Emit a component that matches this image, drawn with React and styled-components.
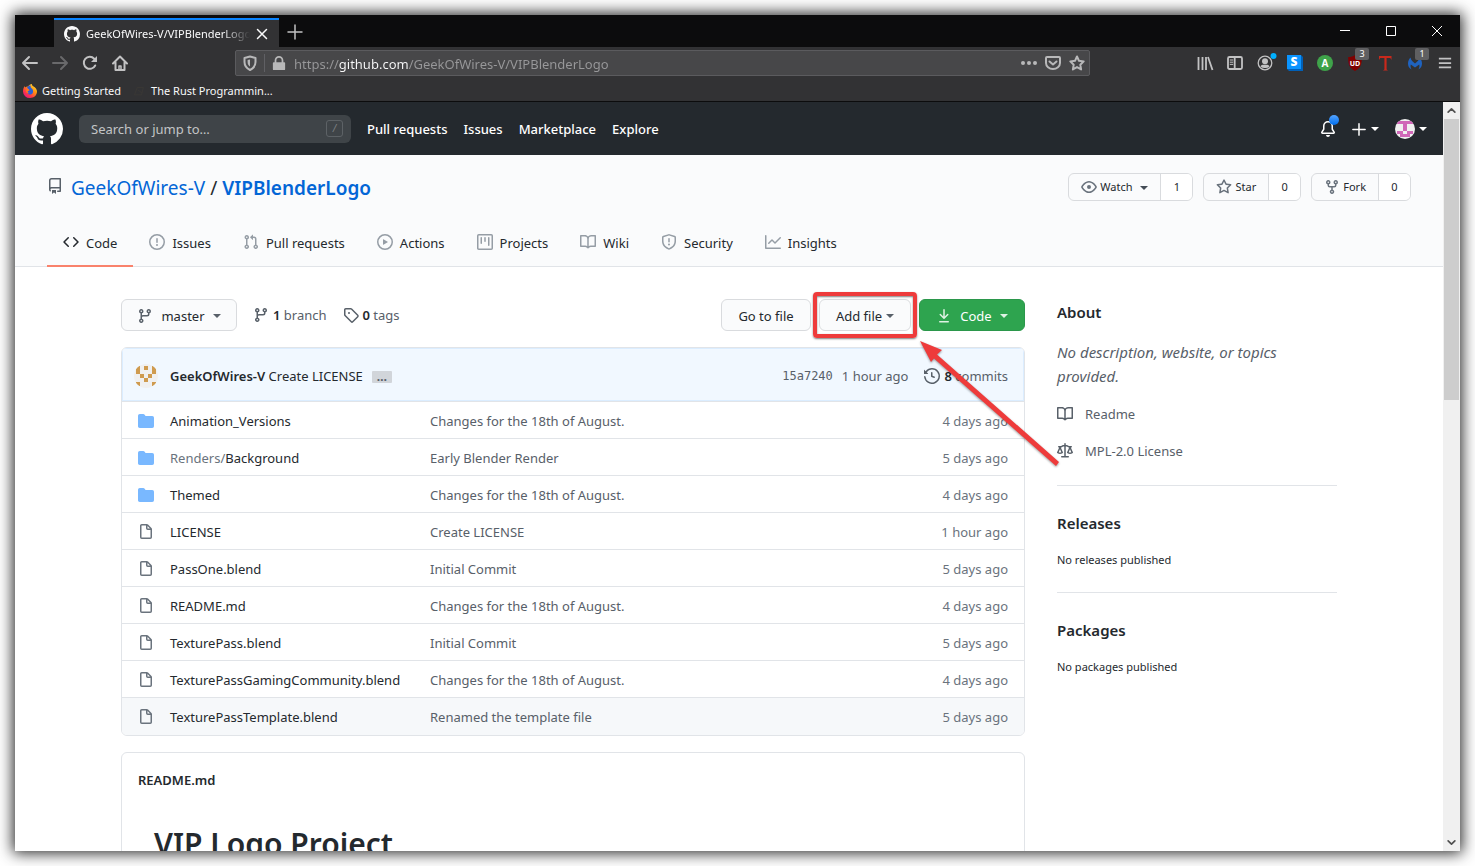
import React from "react";
import styled, { createGlobalStyle, css } from "styled-components";

const P = {
  repo: "M2 2.5A2.5 2.5 0 014.5 0h8.75a.75.75 0 01.75.75v12.5a.75.75 0 01-.75.75h-2.5a.75.75 0 110-1.5h1.75v-2h-8a1 1 0 00-.714 1.7.75.75 0 01-1.072 1.05A2.495 2.495 0 012 11.5v-9zm10.5-1V9h-8c-.356 0-.694.074-1 .208V2.5a1 1 0 011-1h8zM5 12.25v3.25a.25.25 0 00.4.2l1.45-1.087a.25.25 0 01.3 0L8.6 15.7a.25.25 0 00.4-.2v-3.25a.25.25 0 00-.25-.25h-3.5a.25.25 0 00-.25.25z",
  code: "M4.72 3.22a.75.75 0 011.06 1.06L2.06 8l3.72 3.72a.75.75 0 11-1.06 1.06L.47 8.53a.75.75 0 010-1.06l4.25-4.25zm6.56 0a.75.75 0 10-1.06 1.06L13.94 8l-3.72 3.72a.75.75 0 101.06 1.06l4.25-4.25a.75.75 0 000-1.06l-4.25-4.25z",
  issue: "M8 1.5a6.5 6.5 0 100 13 6.5 6.5 0 000-13zM0 8a8 8 0 1116 0A8 8 0 010 8zm9 3a1 1 0 11-2 0 1 1 0 012 0zm-.25-6.25a.75.75 0 00-1.5 0v3.5a.75.75 0 001.5 0v-3.5z",
  pull: "M7.177 3.073L9.573.677A.25.25 0 0110 .854v4.792a.25.25 0 01-.427.177L7.177 3.427a.25.25 0 010-.354zM3.75 2.5a.75.75 0 100 1.5.75.75 0 000-1.5zm-2.25.75a2.25 2.25 0 113 2.122v5.256a2.251 2.251 0 11-1.5 0V5.372A2.25 2.25 0 011.5 3.25zM11 2.5h-1V4h1a1 1 0 011 1v5.628a2.251 2.251 0 101.5 0V5A2.5 2.5 0 0011 2.5zm1 10.25a.75.75 0 111.5 0 .75.75 0 01-1.5 0zM3.75 12a.75.75 0 100 1.5.75.75 0 000-1.5z",
  play: "M1.5 8a6.5 6.5 0 1113 0 6.5 6.5 0 01-13 0zM8 0a8 8 0 100 16A8 8 0 008 0zM6.379 5.227A.25.25 0 006 5.442v5.117a.25.25 0 00.379.214l4.264-2.559a.25.25 0 000-.428L6.379 5.227z",
  project: "M1.75 0A1.75 1.75 0 000 1.75v12.5C0 15.216.784 16 1.75 16h12.5A1.75 1.75 0 0016 14.25V1.75A1.75 1.75 0 0014.25 0H1.75zM1.5 1.75a.25.25 0 01.25-.25h12.5a.25.25 0 01.25.25v12.5a.25.25 0 01-.25.25H1.75a.25.25 0 01-.25-.25V1.75zM11.75 3a.75.75 0 00-.75.75v7.5a.75.75 0 001.5 0v-7.5a.75.75 0 00-.75-.75zm-8.25.75a.75.75 0 011.5 0v5.5a.75.75 0 01-1.5 0v-5.5zM8 3a.75.75 0 00-.75.75v3.5a.75.75 0 001.5 0v-3.5A.75.75 0 008 3z",
  book: "M0 1.75A.75.75 0 01.75 1h4.253c1.227 0 2.317.59 3 1.501A3.744 3.744 0 0111.006 1h4.245a.75.75 0 01.75.75v10.5a.75.75 0 01-.75.75h-4.507a2.25 2.25 0 00-1.591.659l-.622.621a.75.75 0 01-1.06 0l-.622-.621A2.25 2.25 0 005.258 13H.75a.75.75 0 01-.75-.75V1.75zm8.755 3a2.25 2.25 0 012.25-2.25H14.5v9h-3.757c-.71 0-1.4.201-1.992.572l.004-7.322zm-1.504 7.324l.004-5.073-.002-2.253A2.25 2.25 0 005.003 2.5H1.5v9h3.757a3.75 3.75 0 011.994.574z",
  shield: "M7.467.133a1.75 1.75 0 011.066 0l5.25 1.68A1.75 1.75 0 0115 3.48V7c0 1.566-.32 3.182-1.303 4.682-.983 1.498-2.585 2.813-5.032 3.855a1.7 1.7 0 01-1.33 0c-2.447-1.042-4.049-2.357-5.032-3.855C1.32 10.182 1 8.566 1 7V3.48a1.75 1.75 0 011.217-1.667l5.25-1.68zm.61 1.429a.25.25 0 00-.153 0l-5.25 1.68a.25.25 0 00-.174.238V7c0 1.358.275 2.666 1.057 3.86.784 1.194 2.121 2.34 4.366 3.297a.2.2 0 00.154 0c2.245-.956 3.582-2.104 4.366-3.298C13.225 9.666 13.5 8.36 13.5 7V3.48a.25.25 0 00-.174-.237l-5.25-1.68zM9 10.5a1 1 0 11-2 0 1 1 0 012 0zm-.25-5.75a.75.75 0 10-1.5 0v3a.75.75 0 001.5 0v-3z",
  graph: "M1.5 1.75a.75.75 0 00-1.5 0v12.5c0 .414.336.75.75.75h14.5a.75.75 0 000-1.5H1.5V1.75zm14.28 2.53a.75.75 0 00-1.06-1.06L10 7.94 7.53 5.47a.75.75 0 00-1.06 0L3.22 8.72a.75.75 0 001.06 1.06L7 7.06l2.47 2.47a.75.75 0 001.06 0l5.25-5.25z",
  branch: "M11.75 2.5a.75.75 0 100 1.5.75.75 0 000-1.5zm-2.25.75a2.25 2.25 0 113 2.122V6A2.5 2.5 0 0110 8.5H6a1 1 0 00-1 1v1.128a2.251 2.251 0 11-1.5 0V5.372a2.25 2.25 0 111.5 0v1.836A2.492 2.492 0 016 7h4a1 1 0 001-1v-.628A2.25 2.25 0 019.5 3.25zM4.25 12a.75.75 0 100 1.5.75.75 0 000-1.5zM3.5 3.25a.75.75 0 111.5 0 .75.75 0 01-1.5 0z",
  tag: "M2.5 7.775V2.75a.25.25 0 01.25-.25h5.025a.25.25 0 01.177.073l6.25 6.25a.25.25 0 010 .354l-5.025 5.025a.25.25 0 01-.354 0l-6.25-6.25a.25.25 0 01-.073-.177zm-1.5 0V2.75C1 1.784 1.784 1 2.75 1h5.025c.464 0 .91.184 1.238.513l6.25 6.25a1.75 1.75 0 010 2.474l-5.026 5.026a1.75 1.75 0 01-2.474 0l-6.25-6.25A1.75 1.75 0 011 7.775zM6 5a1 1 0 100 2 1 1 0 000-2z",
  download: "M7.47 10.78a.75.75 0 001.06 0l3.75-3.75a.75.75 0 00-1.06-1.06L8.75 8.44V1.75a.75.75 0 00-1.5 0v6.69L4.78 5.97a.75.75 0 00-1.06 1.06l3.75 3.75zM3.75 13a.75.75 0 000 1.5h8.5a.75.75 0 000-1.5h-8.5z",
  history: "M1.643 3.143L.427 1.927A.25.25 0 000 2.104V5.75c0 .138.112.25.25.25h3.646a.25.25 0 00.177-.427L2.715 4.215a6.5 6.5 0 11-1.18 4.458.75.75 0 10-1.493.154 8.001 8.001 0 101.6-5.684zM7.75 4a.75.75 0 01.75.75v2.992l2.028.812a.75.75 0 01-.557 1.392l-2.5-1A.75.75 0 017 8.25v-3.5A.75.75 0 017.75 4z",
  law: "M8.75.75a.75.75 0 00-1.5 0V2h-.984c-.305 0-.604.08-.869.23l-1.288.737A.25.25 0 013.984 3H1.75a.75.75 0 000 1.5h.428L.066 9.192a.75.75 0 00.154.838l.53-.53-.53.53v.001l.002.002.002.002.006.006.016.015.045.04a3.514 3.514 0 00.686.45A4.492 4.492 0 003 11c.88 0 1.556-.22 2.023-.454a3.515 3.515 0 00.686-.45l.045-.04.016-.015.006-.006.002-.002.001-.002L5.25 9.5l.53.53a.75.75 0 00.154-.838L3.822 4.5h.162c.305 0 .604-.08.869-.23l1.289-.737a.25.25 0 01.124-.033h.984V13h-2.5a.75.75 0 000 1.5h6.5a.75.75 0 000-1.5h-2.5V3.5h.984a.25.25 0 01.124.033l1.29.736c.264.152.563.231.868.231h.162l-2.112 4.692a.75.75 0 00.154.838l.53-.53-.53.53v.001l.002.002.002.002.006.006.016.015.045.04a3.517 3.517 0 00.686.45A4.492 4.492 0 0013 11c.88 0 1.556-.22 2.023-.454a3.512 3.512 0 00.686-.45l.045-.04.01-.01.006-.005.006-.006.002-.002.001-.002-.529-.531.53.53a.75.75 0 00.154-.838L13.823 4.5h.427a.75.75 0 000-1.5h-2.234a.25.25 0 01-.124-.033l-1.29-.736A1.75 1.75 0 009.735 2H8.75V.75zM1.695 9.227c.285.135.718.273 1.305.273s1.02-.138 1.305-.273L3 6.327l-1.305 2.9zm10 0c.285.135.718.273 1.305.273s1.02-.138 1.305-.273L13 6.327l-1.305 2.9z",
  eye: "M1.679 7.932c.412-.621 1.242-1.75 2.366-2.717C5.175 4.242 6.527 3.5 8 3.5c1.473 0 2.824.742 3.955 1.715 1.124.967 1.954 2.096 2.366 2.717a.119.119 0 010 .136c-.412.621-1.242 1.75-2.366 2.717C10.825 11.758 9.473 12.5 8 12.5c-1.473 0-2.824-.742-3.955-1.715C2.92 9.818 2.09 8.69 1.679 8.068a.119.119 0 010-.136zM8 2c-1.981 0-3.67.992-4.933 2.078C1.797 5.169.88 6.423.43 7.1a1.619 1.619 0 000 1.798c.45.678 1.367 1.932 2.637 3.024C4.329 13.008 6.019 14 8 14c1.981 0 3.67-.992 4.933-2.078 1.27-1.091 2.187-2.345 2.637-3.023a1.619 1.619 0 000-1.798c-.45-.678-1.367-1.932-2.637-3.023C11.671 2.992 9.981 2 8 2zm0 8a2 2 0 100-4 2 2 0 000 4z",
  star: "M8 .25a.75.75 0 01.673.418l1.882 3.815 4.21.612a.75.75 0 01.416 1.279l-3.046 2.97.719 4.192a.75.75 0 01-1.088.791L8 12.347l-3.766 1.98a.75.75 0 01-1.088-.79l.72-4.194L.818 6.374a.75.75 0 01.416-1.28l4.21-.611L7.327.668A.75.75 0 018 .25zm0 2.445L6.615 5.5a.75.75 0 01-.564.41l-3.097.45 2.24 2.184a.75.75 0 01.216.664l-.528 3.084 2.769-1.456a.75.75 0 01.698 0l2.77 1.456-.53-3.084a.75.75 0 01.216-.664l2.24-2.183-3.096-.45a.75.75 0 01-.564-.41L8 2.694z",
  fork: "M5 3.25a.75.75 0 11-1.5 0 .75.75 0 011.5 0zm0 2.122a2.25 2.25 0 10-1.5 0v.878A2.25 2.25 0 005.75 8.5h1.5v2.128a2.251 2.251 0 101.5 0V8.5h1.5a2.25 2.25 0 002.25-2.25v-.878a2.25 2.25 0 10-1.5 0v.878a.75.75 0 01-.75.75h-4.5A.75.75 0 015 6.25v-.878zm3.75 7.378a.75.75 0 11-1.5 0 .75.75 0 011.5 0zm3-8.75a.75.75 0 100-1.5.75.75 0 000 1.5z",
  folder: "M1.75 1A1.75 1.75 0 000 2.75v10.5C0 14.216.784 15 1.75 15h12.5A1.75 1.75 0 0016 13.25v-8.5A1.75 1.75 0 0014.25 3h-6.5a.25.25 0 01-.2-.1l-.9-1.2c-.33-.44-.85-.7-1.4-.7h-3.5z",
  file: "M3.75 1.5a.25.25 0 00-.25.25v11.5c0 .138.112.25.25.25h8.5a.25.25 0 00.25-.25V6H9.75A1.75 1.75 0 018 4.25V1.5H3.75zm5.75.56v2.19c0 .138.112.25.25.25h2.19L9.5 2.06zM2 1.75C2 .784 2.784 0 3.75 0h5.086c.464 0 .909.184 1.237.513l3.414 3.414c.329.328.513.773.513 1.237v8.086A1.75 1.75 0 0112.25 15h-8.5A1.75 1.75 0 012 13.25V1.75z",
  bell: "M8 16a2 2 0 001.985-1.75c.017-.137-.097-.25-.235-.25h-3.5c-.138 0-.252.113-.235.25A2 2 0 008 16z M8 1.5A3.5 3.5 0 004.5 5v2.947c0 .346-.102.683-.294.97l-1.703 2.556a.018.018 0 00-.003.01l.001.006c0 .002.002.004.004.006a.017.017 0 00.006.004l.007.001h10.964l.007-.001a.016.016 0 00.006-.004.016.016 0 00.004-.006l.001-.007a.017.017 0 00-.003-.01l-1.703-2.554a1.75 1.75 0 01-.294-.97V5A3.5 3.5 0 008 1.5zM3 5a5 5 0 0110 0v2.947c0 .05.015.098.042.139l1.703 2.555A1.518 1.518 0 0113.482 13H2.518a1.518 1.518 0 01-1.263-2.36l1.703-2.554A.25.25 0 003 7.947V5z",
  github: "M8 0C3.58 0 0 3.58 0 8c0 3.54 2.29 6.53 5.47 7.59.4.07.55-.17.55-.38 0-.19-.01-.82-.01-1.49-2.01.37-2.53-.49-2.69-.94-.09-.23-.48-.94-.82-1.13-.28-.15-.68-.52-.01-.53.63-.01 1.08.58 1.23.82.72 1.21 1.87.87 2.33.66.07-.52.28-.87.51-1.07-1.78-.2-3.64-.89-3.64-3.95 0-.87.31-1.59.82-2.15-.08-.2-.36-1.02.08-2.12 0 0 .67-.21 2.2.82.64-.18 1.32-.27 2-.27.68 0 1.36.09 2 .27 1.53-1.04 2.2-.82 2.2-.82.44 1.1.16 1.92.08 2.12.51.56.82 1.27.82 2.15 0 3.07-1.87 3.75-3.65 3.95.29.25.54.73.54 1.48 0 1.07-.01 1.93-.01 2.2 0 .21.15.46.55.38A8.013 8.013 0 0016 8c0-4.42-3.58-8-8-8z",
};

const Oct = ({ name, size = 16 }) => (
  <svg width={size} height={size} viewBox="0 0 16 16" fill="currentColor" aria-hidden="true">
    <path fillRule="evenodd" d={P[name]} />
  </svg>
);

const Global = createGlobalStyle`
  *, *::before, *::after { box-sizing: border-box; }
  body { margin: 0; background: #fff; color: #24292e; font: 13px/20px "Noto Sans", "Open Sans", sans-serif; overflow: hidden; }
  a { color: inherit; text-decoration: none; }
  button, input { font: inherit; color: inherit; margin: 0; padding: 0; border: 0; background: none; }
  button { cursor: pointer; }
  svg { display: block; flex: none; overflow: visible; }
  h1, h2, p, ul { margin: 0; padding: 0; font-size: inherit; }
`;

/* ---------- browser window ---------- */
const Win = styled.div`
  margin: 15px;
  height: calc(100vh - 30px);
  display: flex;
  flex-direction: column;
  overflow: hidden;
  background: #fff;
  box-shadow: 0 0 14px 2px rgba(0, 0, 0, 0.85);
`;
const TabStrip = styled.div`
  flex: none;
  height: 32px;
  display: flex;
  align-items: flex-end;
  padding-left: 39px;
  background: #0c0c0d;
  color: #f9f9fa;
  font-size: 11px;
`;
const BrowserTab = styled.div`
  width: 225px;
  height: 29px;
  display: flex;
  align-items: center;
  gap: 6px;
  padding: 0 11px 0 10px;
  border-top: 2px solid #0a84ff;
  background: #323234;
`;
const TabLabel = styled.span`
  flex: 1;
  min-width: 0;
  overflow: hidden;
  white-space: nowrap;
  mask-image: linear-gradient(to left, transparent, #000 28px);
`;
const IconButton = styled.button`
  position: relative;
  flex: none;
  width: ${(p) => p.$w || 30}px;
  height: ${(p) => p.$h || 32}px;
  display: flex;
  align-items: center;
  justify-content: center;
  color: ${(p) => p.$color || "#c2c2c3"};
`;
const Spacer = styled.div`
  flex: 1;
`;
const Toolbar = styled.div`
  flex: none;
  height: 32px;
  display: flex;
  align-items: center;
  background: #323234;
`;
const UrlBox = styled.div`
  flex: 1;
  height: 26px;
  margin: 0 100px;
  display: flex;
  align-items: center;
  padding: 0 1px 0 6px;
  border: 1px solid #5b5b5e;
  border-radius: 2px;
  background: #474749;
  color: #b8b8b9;
`;
const UrlDivider = styled.span`
  width: 1px;
  height: 18px;
  margin: 0 7px 0 6px;
  background: #606064;
`;
const UrlInput = styled.input`
  flex: 1;
  min-width: 0;
  margin-left: 8px;
  padding-top: 2px;
  outline: 0;
  color: transparent;
  background: linear-gradient(90deg, #98989a 45px, #f9f9fa 45px, #f9f9fa 115px, #98989a 115px);
  -webkit-background-clip: text;
  background-clip: text;
`;
const UrlActions = styled.div`
  display: flex;
  align-items: center;
  gap: 8px;
  padding-right: 3px;
`;
const Count = styled.span`
  position: absolute;
  top: 1px;
  right: 1px;
  width: 14px;
  height: 12px;
  border-radius: 2px;
  background: #5f5f61;
  color: #fff;
  font-size: 9px;
  line-height: 12px;
  text-align: center;
`;
const Bookmarks = styled.div`
  flex: none;
  height: 23px;
  display: flex;
  align-items: center;
  gap: 11px;
  padding: 1px 8px 0;
  border-bottom: 1px solid #0c0c0d;
  background: #323234;
  color: #f9f9fa;
  font-size: 11px;
`;
const Bookmark = styled.a`
  display: flex;
  align-items: center;
  gap: 5px;
`;
const Viewport = styled.div`
  flex: 1;
  min-height: 0;
  display: flex;
`;
const Page = styled.div`
  flex: 1;
  min-width: 0;
  overflow: hidden;
`;
const Scrollbar = styled.div`
  flex: none;
  width: 17px;
  display: flex;
  flex-direction: column;
  align-items: center;
  background: #f0f0f0;
  padding: 0 1px;
`;
const Thumb = styled.div`
  width: 100%;
  height: 37.5%;
  background: #cdcdcd;
`;

/* ---------- site header ---------- */
const Header = styled.header`
  height: 53px;
  display: flex;
  align-items: center;
  gap: 16px;
  padding: 0 16px;
  background: #24292e;
  color: #fff;
  font-weight: 500;
`;
const SearchBox = styled.label`
  width: 272px;
  height: 28px;
  display: flex;
  align-items: center;
  padding: 0 8px 0 12px;
  border-radius: 6px;
  background: #3f4448;
  font-weight: 400;
`;
const SearchInput = styled.input`
  flex: 1;
  min-width: 0;
  outline: 0;
  &::placeholder { color: #c3c5c6; opacity: 1; }
`;
const Slash = styled.kbd`
  width: 17px;
  height: 17px;
  border: 1px solid #5d6266;
  border-radius: 3px;
  color: #7d8185;
  font: italic 10px/15px "Noto Sans", sans-serif;
  text-align: center;
`;
const HeaderTools = styled.div`
  margin-left: auto;
  display: flex;
  align-items: center;
  gap: 16px;
`;
const HeaderButton = styled.button`
  position: relative;
  display: flex;
  align-items: center;
  gap: ${(p) => p.$gap || 5}px;
`;
const Dot = styled.span`
  position: absolute;
  top: -6px;
  right: -3px;
  width: 10px;
  height: 10px;
  border-radius: 50%;
  background: linear-gradient(#54a3ff, #006eed);
`;
const Caret = styled.span`
  flex: none;
  border: 4px solid transparent;
  border-top-color: currentColor;
  border-bottom: 0;
`;

/* ---------- repository header ---------- */
const RepoHead = styled.div`
  border-bottom: 1px solid #e1e4e8;
  background: #fafbfc;
`;
const TitleRow = styled.div`
  display: flex;
  align-items: flex-start;
  justify-content: space-between;
  padding: 18px 32px 0;
`;
const Title = styled.h1`
  display: flex;
  align-items: center;
  font-size: 19px;
  line-height: 30px;
  font-weight: 400;
  color: #0366d6;
  svg { margin: -4px 8px 0 0; color: #586069; }
  b { font-weight: 600; }
`;
const Sep = styled.span`
  margin: 0 5px;
  color: #24292e;
`;
const Social = styled.div`
  display: flex;
  gap: 10px;
  font-size: 11px;
`;
const SplitButton = styled.div`
  display: flex;
  height: 28px;
  border: 1px solid #d9dbde;
  border-radius: 6px;
  overflow: hidden;
  background: #fafbfc;
`;
const SplitMain = styled.button`
  display: flex;
  align-items: center;
  gap: 3px;
  padding: 0 12px;
  svg { color: #6a737d; }
  ${Caret} { margin: 2px 0 0 5px; color: #444d56; }
`;
const SplitCount = styled.a`
  min-width: 32px;
  padding: 3px 12px;
  border-left: 1px solid #d9dbde;
  background: #fff;
  text-align: center;
`;
const Tabs = styled.nav`
  display: flex;
  padding: 18px 32px 0;
`;
const Tab = styled.a`
  height: 46px;
  display: flex;
  align-items: center;
  gap: 7px;
  padding: 0 16px;
  border-bottom: 2px solid transparent;
  margin-bottom: -1px;
  svg { color: #959da5; margin-top: -2px; }
  ${(p) => p.$on && css`
    border-bottom-color: #f9826c;
    svg { color: #24292e; }
  `}
`;

/* ---------- repository body ---------- */
const Body = styled.div`
  max-width: 1280px;
  margin: 0 auto;
  padding: 32px;
  display: flex;
  gap: 32px;
`;
const Main = styled.main`
  flex: 1;
  min-width: 0;
`;
const Actions = styled.div`
  display: flex;
  align-items: center;
  height: 32px;
  gap: 8px;
  margin-bottom: 16px;
`;
const Btn = styled.button`
  height: 32px;
  width: ${(p) => p.$w}px;
  display: flex;
  align-items: center;
  justify-content: center;
  gap: ${(p) => p.$gap || 0}px;
  padding-top: 2px;
  border: 1px solid ${(p) => (p.$primary ? "#2b974b" : "#d9dbde")};
  border-radius: 6px;
  background: ${(p) => (p.$primary ? "#2ea44f" : "#fafbfc")};
  color: ${(p) => (p.$primary ? "#fff" : "#24292e")};
  svg, ${Caret} { color: ${(p) => (p.$primary ? "#dff2e4" : "#586069")}; }
`;
const Stat = styled.a`
  display: flex;
  align-items: center;
  gap: 4px;
  margin-left: ${(p) => p.$ml || 8}px;
  color: #586069;
  b { font-weight: 600; color: #24292e; }
`;
const Highlighted = styled.div`
  position: relative;
`;
const Frame = styled.span`
  position: absolute;
  inset: -7px -6px;
  border: 4px solid #ee3b3b;
  border-radius: 4px;
  box-shadow: 0 1px 2px rgba(0, 0, 0, 0.5), inset 0 1px 2px rgba(0, 0, 0, 0.5);
  pointer-events: none;
`;
const Arrow = styled.svg`
  position: absolute;
  top: 41px;
  left: 100px;
  z-index: 2;
  filter: drop-shadow(0 1px 1px rgba(0, 0, 0, 0.4));
  pointer-events: none;
`;
const Files = styled.div`
  border: 1px solid #e1e4e8;
  border-radius: 6px;
  overflow: hidden;
`;
const Commit = styled.div`
  height: 53px;
  display: flex;
  align-items: center;
  padding: 2px 16px 0 12px;
  background: #f1f8ff;
  box-shadow: inset 0 0 0 1px #dbedff;
  color: #586069;
`;
const CommitText = styled.span`
  margin-left: 12px;
  color: #24292e;
  b { font-weight: 600; }
`;
const Ellipsis = styled.button`
  width: 20px;
  height: 12px;
  margin: 3px auto 0 9px;
  border-radius: 1px;
  background: #d1d5da;
  font-size: 12px;
  font-weight: 700;
  line-height: 6px;
`;
const Sha = styled.a`
  margin-right: 9px;
  font: 12px/20px "DejaVu Sans Mono", "Liberation Mono", monospace;
`;
const Table = styled.table`
  width: 100%;
  border-collapse: collapse;
  table-layout: fixed;
`;
const Row = styled.tr`
  height: 37px;
  background: ${(p) => (p.$hover ? "#f6f8fa" : "#fff")};
  td { padding: 2px 0 0; border-top: 1px solid #e1e4e8; white-space: nowrap; color: #586069; }
`;
const IconCell = styled.td`
  width: 48px;
  svg { margin-left: 16px; color: ${(p) => (p.$dir ? "#79b8ff" : "#6a737d")}; }
`;
const NameCell = styled.td`
  width: 260px;
  a { color: #24292e; }
  i { font-style: normal; color: #6a737d; }
`;
const AgeCell = styled.td`
  width: 140px;
  text-align: right;
  && { padding-right: 16px; color: #6a737d; }
`;
const Readme = styled.section`
  margin-top: 16px;
  padding: 17px 16px;
  height: 240px;
  border: 1px solid #e1e4e8;
  border-radius: 6px;
  h2 { font-weight: 600; font-size: 13px; }
  h1 { margin: 34px 16px 0; font-size: 30px; line-height: 40px; font-weight: 600; }
`;
const Side = styled.aside`
  flex: none;
  width: 280px;
`;
const SideBlock = styled.section`
  padding: ${(p) => (p.$first ? "1px 0 24px" : "25px 0 22px")};
  border-bottom: ${(p) => (p.$last ? "0" : "1px solid #e1e4e8")};
  h2 { font-size: 15px; line-height: 24px; font-weight: 600; }
`;
const About = styled.p`
  margin: 16px 0;
  font-size: 15px;
  line-height: 24px;
  font-style: italic;
  color: #586069;
`;
const SideLink = styled.a`
  display: flex;
  align-items: center;
  gap: 12px;
  height: 20px;
  margin-bottom: 17px;
  color: #586069;
  &:last-child { margin-bottom: 0; }
`;
const Note = styled.p`
  && { margin-top: 15px; font-size: 11px; }
`;

const Svg = ({ s = 16, children, ...r }) => (
  <svg width={s} height={s} viewBox="0 0 16 16" fill="none" stroke="currentColor" strokeWidth="2" strokeLinecap="round" strokeLinejoin="round" aria-hidden="true" {...r}>
    {children}
  </svg>
);

const Firefox = () => (
  <svg width="14" height="14" viewBox="0 0 14 14" aria-hidden="true">
    <defs>
      <linearGradient id="fx" x1="1" y1="0" x2="0.2" y2="1">
        <stop offset="0" stopColor="#fff44f" />
        <stop offset="0.4" stopColor="#ff980e" />
        <stop offset="0.75" stopColor="#ff3647" />
        <stop offset="1" stopColor="#e31587" />
      </linearGradient>
    </defs>
    <path d="M7 14a6.8 6.8 0 01-7-6.600C0 5 .8 3.200 1.800 2l.2 1.500C3 2.500 4 2.300 5 2.400 6 1.200 7.500.3 9 0c-.3 1 .3 1.600 1.200 2.200C12.500 3.500 14 5.200 14 7.500 14 11.200 11 14 7 14z" fill="url(#fx)" />
    <path d="M4 3.500c1.200-1.500 2.600-1.900 3.600-1.900-.2 1.300 0 2 .9 2.700C9.800 5 10.400 7 9.900 8.500 9.300 10.300 7.500 11 6 10.400 4.300 9.800 3.600 8 4.300 6.600l2.200-.4z" fill="#2a5fd6" />
    <path d="M3.300 5.500c1.200-.5 2.200 0 3.200.4-.4.900-1.500.7-1.800 1.600-.2 1 .9 1.500 2 1.200-1.500 1.300-3.700.2-3.600-1.800z" fill="#ff7a1c" />
  </svg>
);

const Identicon = ({ size, color, cells }) => (
  <svg width={size} height={size} viewBox="0 0 24 24" aria-hidden="true">
    <clipPath id={"c" + size}><circle cx="12" cy="12" r="12" /></clipPath>
    <g clipPath={`url(#c${size})`} shapeRendering="crispEdges">
      <rect width="24" height="24" fill="#f0f0f0" />
      {cells.map(([x, y]) => <rect key={x + "-" + y} x={2 + x * 4} y={2 + y * 4} width="4" height="4" fill={color} />)}
    </g>
  </svg>
);

const TABS = [["code", "Code"], ["issue", "Issues"], ["pull", "Pull requests"], ["play", "Actions"], ["project", "Projects"], ["book", "Wiki"], ["shield", "Security"], ["graph", "Insights"]];
const AUG = "Changes for the 18th of August.";
const FILES = [
  ["Animation_Versions", AUG, "4 days ago", true],
  ["Background", "Early Blender Render", "5 days ago", true, "Renders/"],
  ["Themed", AUG, "4 days ago", true],
  ["LICENSE", "Create LICENSE", "1 hour ago"],
  ["PassOne.blend", "Initial Commit", "5 days ago"],
  ["README.md", AUG, "4 days ago"],
  ["TexturePass.blend", "Initial Commit", "5 days ago"],
  ["TexturePassGamingCommunity.blend", AUG, "4 days ago"],
  ["TexturePassTemplate.blend", "Renamed the template file", "5 days ago"],
];

function Browser() {
  return (
    <>
      <TabStrip>
        <BrowserTab>
          <Oct name="github" />
          <TabLabel>GeekOfWires-V/VIPBlenderLogo</TabLabel>
          <IconButton $w={12} $h={20} $color="#f9f9fa" aria-label="Close tab">
            <Svg s={12}><path d="M2 2l12 12M14 2L2 14" /></Svg>
          </IconButton>
        </BrowserTab>
        <IconButton $w={32} $h={30} aria-label="New tab"><Svg s={14} strokeWidth="1.700"><path d="M8 0v16M0 8h16" /></Svg></IconButton>
        <Spacer />
        {[["Minimize", "M3 7.500h10"], ["Maximize", "M3.500 3.500h9v9h-9z"], ["Close", "M3 3l10 10M13 3L3 13"]].map(([l, d]) => (
          <IconButton key={l} $w={46} $color="#fff" aria-label={l}><Svg strokeWidth="1" strokeLinecap="butt" strokeLinejoin="miter"><path d={d} /></Svg></IconButton>
        ))}
      </TabStrip>
      <Toolbar>
        <IconButton aria-label="Back"><Svg><path d="M15 8H1M7 2L1 8l6 6" /></Svg></IconButton>
        <IconButton $color="#69696b" aria-label="Forward"><Svg><path d="M1 8h14M9 2l6 6-6 6" /></Svg></IconButton>
        <IconButton aria-label="Reload">
          <Svg><path d="M13.200 10.500a6 6 0 11-1-6.800" /><path d="M15 1v6H9z" fill="currentColor" stroke="none" /></Svg>
        </IconButton>
        <IconButton aria-label="Home">
          <Svg><path d="M1 8.500L8 1.500l7 7M3.500 7.500V15h9V7.500" /><path d="M7 15v-4h2v4" strokeWidth="1.500" /></Svg>
        </IconButton>
        <UrlBox>
          <Svg><path d="M2.500 3L8 1.500 13.500 3v4c0 4-2.500 6.500-5.500 8-3-1.500-5.500-4-5.500-8z" /><path d="M8 4.500v7C6.500 10.500 5.600 9 5.600 7V5z" fill="currentColor" stroke="none" /></Svg>
          <UrlDivider />
          <Svg s={14}><rect x="1" y="7" width="14" height="9" rx="1" fill="currentColor" stroke="none" /><path d="M4 8V5a4 4 0 018 0v3" /></Svg>
          <UrlInput aria-label="Address" defaultValue="https://github.com/GeekOfWires-V/VIPBlenderLogo" />
          <UrlActions>
            <Svg fill="currentColor" stroke="none"><circle cx="2" cy="8" r="2" /><circle cx="8" cy="8" r="2" /><circle cx="14" cy="8" r="2" /></Svg>
            <Svg><path d="M1 3a1 1 0 011-1h12a1 1 0 011 1v5a7 6 0 01-14 0zM4.500 6.500L8 9.500l3.500-3" /></Svg>
            <Svg><path d="M8 1.500l2 4.300 4.700.6-3.400 3.300.8 4.700L8 12.100l-4.100 2.300.8-4.700L1.300 6.400 6 5.800z" /></Svg>
          </UrlActions>
        </UrlBox>
        <IconButton aria-label="Library"><Svg strokeLinecap="butt"><path d="M1.500 2v13M5.500 2v13M9 2v13M11 2l4.500 13" strokeWidth="1.800" /></Svg></IconButton>
        <IconButton aria-label="Sidebars"><Svg strokeWidth="1.800"><rect x="1" y="2" width="14" height="12" rx="1.500" /><path d="M7.700 2v12" /><path d="M3.200 5h2.600M3.200 7.200h2.600M3.200 9.400h2.600" strokeWidth="1" /></Svg></IconButton>
        <IconButton aria-label="Account">
          <Svg><circle cx="8" cy="8" r="6.800" strokeWidth="1.300" /><circle cx="8" cy="6.300" r="3" fill="currentColor" stroke="none" /><path d="M3.500 11.500C4.500 9.500 6 9.800 8 9.800s3.500-.3 4.500 1.700A6 6 0 018 13a6 6 0 01-4.500-1.500z" fill="currentColor" stroke="none" /><circle cx="16.500" cy="1" r="3" fill="#00b0ff" stroke="none" /></Svg>
        </IconButton>
        <IconButton aria-label="S extension">
          <svg width="16" height="16" viewBox="0 0 16 16"><path d="M14 0l2 2v14H2l-2-2z" fill="#0060b8" /><rect width="14" height="14" fill="#0a94ff" /><text x="7" y="11" fontSize="12" fontWeight="800" textAnchor="middle" fill="#fff" fontFamily="Open Sans">S</text></svg>
        </IconButton>
        <IconButton aria-label="A extension">
          <svg width="16" height="16" viewBox="0 0 16 16"><circle cx="8" cy="8" r="8" fill="#3fa34a" /><text x="8" y="11.500" fontSize="10" fontWeight="700" textAnchor="middle" fill="#fff" fontFamily="Open Sans">A</text></svg>
        </IconButton>
        <IconButton aria-label="Content blocker">
          <svg width="16" height="16" viewBox="0 0 16 16"><path d="M8 0c2 1.500 4 2 6.800 2 0 7-.5 10.500-6.800 14C1.700 12.500 1.200 9 1.200 2 4 2 6 1.500 8 0z" fill="#800000" /><text x="8" y="10.500" fontSize="7" fontWeight="700" textAnchor="middle" fill="#fff" fontFamily="Open Sans">UD</text></svg>
          <Count>3</Count>
        </IconButton>
        <IconButton aria-label="T extension">
          <svg width="16" height="16" viewBox="0 0 16 16"><path d="M2 5V1h12.500v4l-1.200-2H9.600v11.500l1.400 1H6l1.400-1V3H3.200z" fill="#c9291c" /></svg>
        </IconButton>
        <IconButton aria-label="Protection">
          <svg width="16" height="16" viewBox="0 0 16 16"><path d="M1 8.500C1 6 2 4 3.500 2.500 4 5.500 6 7 8 8.500c2-1.500 4-3 4.500-6C14 4 15 6 15 8.500c0 2.500-1 4.500-3.500 6 1-2 1.200-3.500.7-5L8 12.500 3.800 9.500c-.5 1.500-.3 3 .7 5C2 13 1 11 1 8.500z" fill="#1f63c0" /></svg>
          <Count>1</Count>
        </IconButton>
        <IconButton aria-label="Menu"><Svg s={14}><path d="M1 3h14M1 8h14M1 13h14" strokeLinecap="butt" /></Svg></IconButton>
      </Toolbar>
      <Bookmarks>
        <Bookmark href="#"><Firefox />Getting Started</Bookmark>
        <Bookmark href="#">
          <Svg s={14} stroke="#3a3835" strokeWidth="1"><path d="M3 12l3-8h7l-2 8zM7 7l4 3" /></Svg>
          <span>The Rust Programmin...</span>
        </Bookmark>
      </Bookmarks>
    </>
  );
}

function SocialButton({ icon, label, count, menu }) {
  return (
    <SplitButton>
      <SplitMain><Oct name={icon} />{label}{menu && <Caret />}</SplitMain>
      <SplitCount href="#">{count}</SplitCount>
    </SplitButton>
  );
}

export default function App() {
  return (
    <>
      <Global />
      <Win>
        <Browser />
        <Viewport>
          <Page>
            <Header>
              <a href="#" aria-label="Home"><Oct name="github" size={32} /></a>
              <SearchBox><SearchInput aria-label="Search" placeholder="Search or jump to…" /><Slash>/</Slash></SearchBox>
              {["Pull requests", "Issues", "Marketplace", "Explore"].map((t) => <a key={t} href="#">{t}</a>)}
              <HeaderTools>
                <HeaderButton aria-label="Notifications"><Oct name="bell" /><Dot /></HeaderButton>
                <HeaderButton aria-label="Create new"><Svg s={14} strokeWidth="1.700"><path d="M8 2v13M1 8.500h14" /></Svg><Caret /></HeaderButton>
                <HeaderButton $gap={4} aria-label="Profile">
                  <Identicon size={20} color="#d067b8" cells={[[0, 0], [1, 0], [2, 0], [3, 0], [4, 0], [2, 1], [2, 2], [0, 3], [1, 3], [3, 3], [4, 3], [1, 4], [2, 4], [3, 4]]} />
                  <Caret />
                </HeaderButton>
              </HeaderTools>
            </Header>
            <RepoHead>
              <TitleRow>
                <Title><Oct name="repo" /><a href="#">GeekOfWires-V</a><Sep>/</Sep><a href="#"><b>VIPBlenderLogo</b></a></Title>
                <Social>
                  <SocialButton icon="eye" label="Watch" count="1" menu />
                  <SocialButton icon="star" label="Star" count="0" />
                  <SocialButton icon="fork" label="Fork" count="0" />
                </Social>
              </TitleRow>
              <Tabs>
                {TABS.map(([i, t], n) => <Tab key={t} href="#" $on={n === 0}><Oct name={i} />{t}</Tab>)}
              </Tabs>
            </RepoHead>
            <Body>
              <Main>
                <Actions>
                  <Btn $w={116} $gap={8}><Oct name="branch" />master<Caret /></Btn>
                  <Stat href="#"><Oct name="branch" /><span><b>1</b> branch</span></Stat>
                  <Stat href="#"><Oct name="tag" /><span><b>0</b> tags</span></Stat>
                  <Spacer />
                  <Btn $w={90}>Go to file</Btn>
                  <Highlighted>
                    <Btn $w={92} $gap={4}>Add file<Caret /></Btn>
                    <Frame />
                    <Arrow width="144" height="128" viewBox="0 0 144 128">
                      <path d="M1 1l22 9-5 4.500L140 122l-3 4L15 18.500l-3 3.500z" fill="#ee3b3b" />
                    </Arrow>
                  </Highlighted>
                  <Btn $w={106} $gap={8} $primary><Oct name="download" />Code<Caret /></Btn>
                </Actions>
                <Files>
                  <Commit>
                    <Identicon size={24} color="#cf9b4f" cells={[[0, 0], [2, 0], [4, 0], [0, 1], [4, 1], [1, 2], [3, 2], [2, 3], [0, 4], [4, 4]]} />
                    <CommitText><b>GeekOfWires-V</b> Create LICENSE</CommitText>
                    <Ellipsis aria-label="More">…</Ellipsis>
                    <Sha href="#">15a7240</Sha>1 hour ago
                    <Stat $ml={16} href="#"><Oct name="history" /><span><b>8</b> commits</span></Stat>
                  </Commit>
                  <Table>
                    <tbody>
                      {FILES.map(([name, msg, age, dir, pre], n) => (
                        <Row key={name} $hover={n === FILES.length - 1}>
                          <IconCell $dir={dir}><Oct name={dir ? "folder" : "file"} /></IconCell>
                          <NameCell><a href="#">{pre && <i>{pre}</i>}{name}</a></NameCell>
                          <td>{msg}</td>
                          <AgeCell>{age}</AgeCell>
                        </Row>
                      ))}
                    </tbody>
                  </Table>
                </Files>
                <Readme>
                  <h2>README.md</h2>
                  <h1>VIP Logo Project</h1>
                </Readme>
              </Main>
              <Side>
                <SideBlock $first>
                  <h2>About</h2>
                  <About>No description, website, or topics provided.</About>
                  <SideLink href="#"><Oct name="book" />Readme</SideLink>
                  <SideLink href="#"><Oct name="law" />MPL-2.0 License</SideLink>
                </SideBlock>
                <SideBlock><h2>Releases</h2><Note>No releases published</Note></SideBlock>
                <SideBlock $last><h2>Packages</h2><Note>No packages published</Note></SideBlock>
              </Side>
            </Body>
          </Page>
          <Scrollbar>
            <IconButton $w={15} $h={17} $color="#505050" aria-label="Scroll up"><Svg s={9}><path d="M2 11l6-6 6 6" strokeWidth="3" /></Svg></IconButton>
            <Thumb />
            <Spacer />
            <IconButton $w={15} $h={17} $color="#505050" aria-label="Scroll down"><Svg s={9}><path d="M2 5l6 6 6-6" strokeWidth="3" /></Svg></IconButton>
          </Scrollbar>
        </Viewport>
      </Win>
    </>
  );
}
